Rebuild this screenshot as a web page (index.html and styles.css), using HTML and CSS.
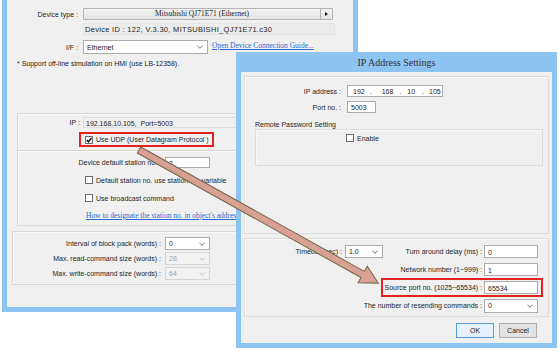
FILE: index.html
```html
<!DOCTYPE html>
<html>
<head>
    <title>IP Address Settings</title>
    <link rel="stylesheet" href="styles.css">
</head>
<body>
<div class="desk">
    <div class="win main">
        <div class="pane">
            <div class="row">
                <span class="lbl">Device type :</span>
                <div class="typebtn"><span class="typetext">Mitsubishi QJ71E71 (Ethernet)</span><span class="typearrow"><i class="tri"></i></span></div>
            </div>
            <div class="row idrow">
                <span class="lbl"></span>
                <div class="idbox">Device ID : 122, V.3.30, MITSUBISHI_QJ71E71.c30</div>
            </div>
            <div class="row ifrow">
                <span class="lbl">I/F :</span>
                <div class="combo ifcombo">Ethernet<svg class="chev" viewBox="0 0 7 4"><path d="M0.5 0.5 L3.5 3.5 L6.5 0.5" fill="none" stroke="#555" stroke-width="1"/></svg></div>
                <a class="link guide" href="#">Open Device Connection Guide...</a>
            </div>
            <p class="note">* Support off-line simulation on HMI (use LB-12358).</p>

            <div class="group g-ip">
                <div class="row iprow">
                    <span class="lbl ip-lbl">IP :</span>
                    <div class="ipbox">192.168.10.105,&nbsp; Port=5003</div>
                </div>
                <div class="udp">
                    <span class="cb"><svg viewBox="0 0 6 6"><path d="M0.8 3 L2.4 4.8 L5.4 0.8" fill="none" stroke="#000" stroke-width="1.4"/></svg></span>
                    <span class="cbtext">Use UDP (User Datagram Protocol )</span>
                </div>
                <div class="sep"></div>
                <div class="row strow">
                    <span class="lbl st-lbl">Device default station no. :</span>
                    <div class="field stfield">2</div>
                </div>
                <div class="check ck1"><span class="cb"></span><span class="cbtext">Default station no. use station no. variable</span></div>
                <div class="check ck2"><span class="cb"></span><span class="cbtext">Use broadcast command</span></div>
                <a class="link howto" href="#">How to designate the station no. in object's address</a>
            </div>

            <div class="group g-size">
                <div class="row srow">
                    <span class="lbl sz-lbl">Interval of block pack (words) :</span>
                    <div class="combo szcombo">0<svg class="chev" viewBox="0 0 7 4"><path d="M0.5 0.5 L3.5 3.5 L6.5 0.5" fill="none" stroke="#555" stroke-width="1"/></svg></div>
                </div>
                <div class="row srow">
                    <span class="lbl sz-lbl">Max. read-command size (words) :</span>
                    <div class="combo szcombo off">28<svg class="chev" viewBox="0 0 7 4"><path d="M0.5 0.5 L3.5 3.5 L6.5 0.5" fill="none" stroke="#b5b5b5" stroke-width="1"/></svg></div>
                </div>
                <div class="row srow">
                    <span class="lbl sz-lbl">Max. write-command size (words) :</span>
                    <div class="combo szcombo off">64<svg class="chev" viewBox="0 0 7 4"><path d="M0.5 0.5 L3.5 3.5 L6.5 0.5" fill="none" stroke="#b5b5b5" stroke-width="1"/></svg></div>
                </div>
            </div>
        </div>
    </div>

    <div class="win dlg">
        <div class="title">IP Address Settings</div>
        <div class="body">
            <div class="panel upper">
                <div class="row drow">
                    <span class="lbl d-lbl">IP address :</span>
                    <div class="field ipfield"><span class="o1">192</span><span class="dot d1">.</span><span class="o2">168</span><span class="dot d2">.</span><span class="o3">10</span><span class="dot d3">.</span><span class="o4">105</span></div>
                </div>
                <div class="row drow portrow">
                    <span class="lbl d-lbl">Port no. :</span>
                    <div class="field portfield">5003</div>
                </div>
                <div class="legend">Remote Password Setting</div>
                <div class="gbox">
                    <div class="check"><span class="cb"></span><span class="cbtext">Enable</span></div>
                </div>
            </div>
            <div class="panel lower">
                <div class="lrow first">
                    <span class="lbl to-lbl">Timeout (sec) :</span>
                    <div class="combo tocombo">1.0<svg class="chev" viewBox="0 0 7 4"><path d="M0.5 0.5 L3.5 3.5 L6.5 0.5" fill="none" stroke="#555" stroke-width="1"/></svg></div>
                    <span class="rlbl push">Turn around delay (ms) :</span>
                    <div class="field rfield">0</div>
                </div>
                <div class="lrow">
                    <span class="rlbl">Network number (1~999) :</span>
                    <div class="field rfield">1</div>
                </div>
                <div class="lrow">
                    <div class="hl">
                        <span class="rlbl">Source port no. (1025~65534) :</span>
                        <div class="field rfield">65534</div>
                    </div>
                </div>
                <div class="lrow">
                    <span class="rlbl">The number of resending commands :</span>
                    <div class="combo rcombo">0<svg class="chev" viewBox="0 0 7 4"><path d="M0.5 0.5 L3.5 3.5 L6.5 0.5" fill="none" stroke="#555" stroke-width="1"/></svg></div>
                </div>
            </div>
            <div class="btns">
                <button class="btn ok">OK</button>
                <button class="btn">Cancel</button>
            </div>
        </div>
    </div>

    <svg class="arrow" viewBox="0 0 560 352">
        <g transform="translate(139 150) rotate(29.1)">
            <polygon points="0,-3.5 256,-3.5 256,-9.5 274,0 256,9.5 256,3.5 0,3.5" fill="#d8a193" stroke="#6f6746" stroke-width="1"/>
        </g>
    </svg>
</div>
</body>
</html>
```

FILE: styles.css
```css
body { margin: 0; background: #fff; font-family: "Liberation Sans", Arial, sans-serif; font-size: 7px; color: #1e1e1e; }
.desk { position: relative; width: 560px; height: 352px; overflow: hidden; }

/* windows on the desktop */
.win { position: absolute; background: #8ec4f2; box-sizing: border-box; }
.main { left: 2px; top: 0; width: 356px; height: 312px; padding: 0 5px 5px; }
.main .pane { background: #f0f0f0; height: 100%; padding-top: 8px; box-sizing: border-box; }
.dlg { left: 236px; top: 52px; width: 321px; height: 296px; padding: 0 5px 5px; }

.row { display: flex; align-items: center; height: 12px; }
.lbl { flex: none; width: 71px; margin-right: 5px; text-align: right; white-space: nowrap; }

.typebtn { display: flex; width: 250px; height: 12px; border: 1px solid #b4b4b4; border-radius: 1px; background: linear-gradient(#f3f3f3, #e4e4e4); box-sizing: border-box; }
.typetext { flex: 1; text-align: center; font-family: "Liberation Serif", serif; font-size: 7.5px; line-height: 10px; }
.typearrow { width: 11px; border-left: 1px solid #b4b4b4; display: flex; align-items: center; justify-content: center; }
.tri { width: 0; height: 0; border-left: 3px solid #111; border-top: 2px solid transparent; border-bottom: 2px solid transparent; }

.idrow { margin-top: 3px; }
.idbox { width: 252px; height: 12px; line-height: 12px; padding-left: 1px; border: 1px solid #e4e4e4; box-sizing: border-box; background: #ececec; font-size: 7.5px; letter-spacing: 0.3px; white-space: nowrap; }

.ifrow { margin-top: 5px; height: 14px; }
.combo { display: flex; align-items: center; justify-content: space-between; background: #fff; border: 1px solid #acacac; padding: 0 4px 0 3px; box-sizing: border-box; flex: none; }
.chev { width: 6px; height: 4px; }
.ifcombo { width: 125px; height: 14px; }
.combo.off { background: #f2f2f2; border-color: #d6d6d6; color: #a2a2a2; }

.link { color: #2a6ad0; text-decoration: underline; font-family: "Liberation Serif", serif; font-size: 7.5px; white-space: nowrap; }
.guide { margin-left: 4px; margin-top: -3px; }

.note { margin: 5px 0 0 10px; line-height: 9px; }

.group { border: 1px solid #d8d8d8; box-shadow: inset 1px 1px 0 #fafafa; }
.g-ip { margin: 45px 5px 0 10px; padding-bottom: 5px; }
.iprow { margin-top: 3px; height: 11px; }
.ip-lbl { width: 62px; margin-right: 3px; }
.ipbox { width: 170px; height: 11px; line-height: 11px; padding-left: 2px; border: 1px solid #dedede; box-sizing: border-box; }

.udp { display: flex; align-items: center; align-self: flex-start; width: max-content; height: 15px; margin: 4px 0 0 61px; padding: 0 3px 0 4px; border: 2px solid #e3231f; box-sizing: border-box; }
.cb { flex: none; display: block; width: 6px; height: 6px; border: 1px solid #6e6e6e; background: #fff; }
.cb svg { display: block; width: 6px; height: 6px; }
.cbtext { margin-left: 3px; white-space: nowrap; }

.sep { margin-top: 3px; border-top: 1px solid #d6d6d6; border-bottom: 1px solid #fafafa; }
.strow { margin-top: 5px; height: 11px; }
.st-lbl { width: 143px; margin-right: 4px; }
.field { flex: none; height: 11px; line-height: 11px; padding-left: 3px; background: #fff; border: 1px solid #acacac; box-sizing: border-box; }
.stfield { width: 45px; }

.check { display: flex; align-items: center; height: 8px; }
.ck1 { margin: 8px 0 0 67px; }
.ck2 { margin: 10px 0 0 67px; }
.howto { display: block; margin: 10px 0 0 68px; line-height: 8px; }

.g-size { margin: 5px 5px 0 5px; padding: 5px 0 4px; }
.srow { height: 13px; margin-bottom: 2px; }
.srow:last-child { margin-bottom: 0; }
.sz-lbl { width: 148px; margin-right: 4px; }
.szcombo { width: 45px; height: 13px; }

/* dialog */
.title { height: 20px; line-height: 21px; text-align: center; font-family: "Liberation Serif", serif; font-size: 10px; color: #333; }
.body { background: #f0f0f0; height: 271px; padding: 4px 3px 0; box-sizing: border-box; }
.panel { border: 1px solid #dcdcdc; box-shadow: inset 1px 1px 0 #fafafa; box-sizing: border-box; }
.upper { height: 158px; padding-top: 8px; }
.drow { height: 12px; }
.d-lbl { width: 96px; margin-right: 6px; }
.ipfield { width: 96px; height: 12px; line-height: 12px; padding-left: 5px; display: flex; }
.d1 { margin-left: 5px; }
.o2 { margin-left: 10px; }
.d2 { margin-left: 6px; }
.o3 { margin-left: 6px; }
.d3 { margin-left: 7px; }
.o4 { margin-left: 5px; }
.portrow { margin-top: 4px; }
.portfield { width: 29px; height: 12px; line-height: 12px; }
.legend { margin: 7px 0 0 10px; line-height: 9px; }
.gbox { width: 288px; height: 37px; margin-left: 10px; padding: 4px 0 0 90px; border: 1px solid #dcdcdc; box-shadow: inset 1px 1px 0 #fafafa; box-sizing: border-box; }

.lower { height: 79px; margin-top: 4px; padding: 6px 10px 0 0; }
.lrow { display: flex; align-items: center; justify-content: flex-end; height: 13px; margin-top: 5px; }
.lrow.first { margin-top: 0; justify-content: flex-start; }
.to-lbl { width: 97px; margin-right: 3px; }
.tocombo { width: 38px; height: 13px; }
.push { margin-left: auto; }
.rlbl { margin-right: 2px; white-space: nowrap; }
.rfield { width: 54px; height: 13px; line-height: 13px; }
.rcombo { width: 54px; height: 14px; }
.hl { display: flex; align-items: center; border: 2px solid #e3231f; padding: 1px 3px 1px 2px; margin: -3px -5px -3px 0; }

.btns { display: flex; justify-content: flex-end; gap: 5px; margin-top: 6px; padding-right: 12px; }
.btn { width: 38px; height: 15px; padding: 0; font-family: "Liberation Sans", Arial, sans-serif; font-size: 7px; color: #1e1e1e; background: #e3e3e3; border: 1px solid #adadad; }
.btn.ok { background: #e5f1fb; border-color: #5a9ad6; }

.arrow { position: absolute; left: 0; top: 0; width: 560px; height: 352px; pointer-events: none; }
```
